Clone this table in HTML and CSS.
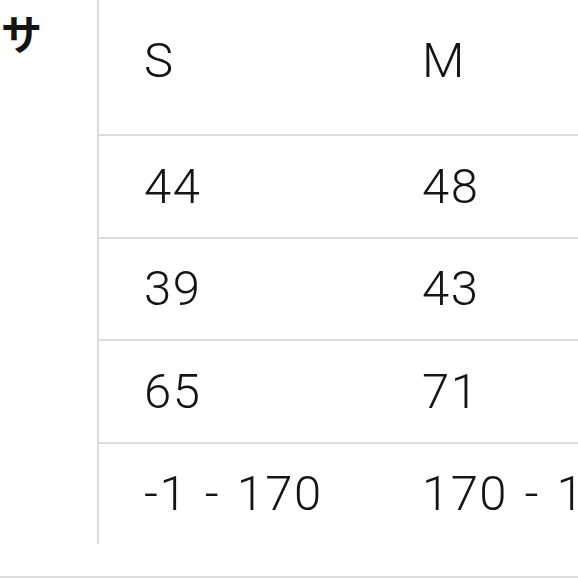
FILE: index.html
```html
<!DOCTYPE html>
<html lang="ja">
<head>
<meta charset="utf-8">
<link rel="stylesheet" href="styles.css">
</head>
<body>
<div class="page">
  <div class="head-col"><span class="label">サ</span></div>
  <div class="grid">
    <div class="cell first">S</div><div class="cell first">M</div>
    <div class="cell">44</div><div class="cell">48</div>
    <div class="cell">39</div><div class="cell">43</div>
    <div class="cell">65</div><div class="cell">71</div>
    <div class="cell">-1 - 170</div><div class="cell">170 - 175</div>
  </div>
</div>
<div class="footer-line"></div>
</body>
</html>
```
FILE: styles.css
```css
html, body {
  margin: 0;
  padding: 0;
  background: #fff;
}
body {
  width: 578px;
  height: 578px;
  overflow: hidden;
  font-family: Roboto, "Liberation Sans", sans-serif;
  color: #141414;
}
.page {
  display: flex;
  height: 544px;
}
.head-col {
  width: 97px;
  flex: none;
  border-right: 2px solid #dcdcdc;
}
.label {
  display: block;
  font-family: "Noto Sans CJK JP", sans-serif;
  font-weight: 700;
  font-size: 41px;
  line-height: 40px;
  padding-top: 12px;
  margin-left: 1px;
}
.grid {
  flex: 1;
  display: grid;
  grid-template-columns: 278px 1fr;
  grid-template-rows: 134px repeat(4, 1fr);
  overflow: hidden;
}
.cell {
  display: flex;
  align-items: center;
  padding-left: 45px;
  font-size: 49px;
  font-weight: 300;
  letter-spacing: 1.5px;
  word-spacing: 3px;
  white-space: nowrap;
  overflow: hidden;
  border-top: 2px solid #dcdcdc;
}
.cell.first {
  border-top: none;
  padding-bottom: 14px;
}
.footer-line {
  margin-top: 32px;
  height: 2px;
  background: #dcdcdc;
}
```
